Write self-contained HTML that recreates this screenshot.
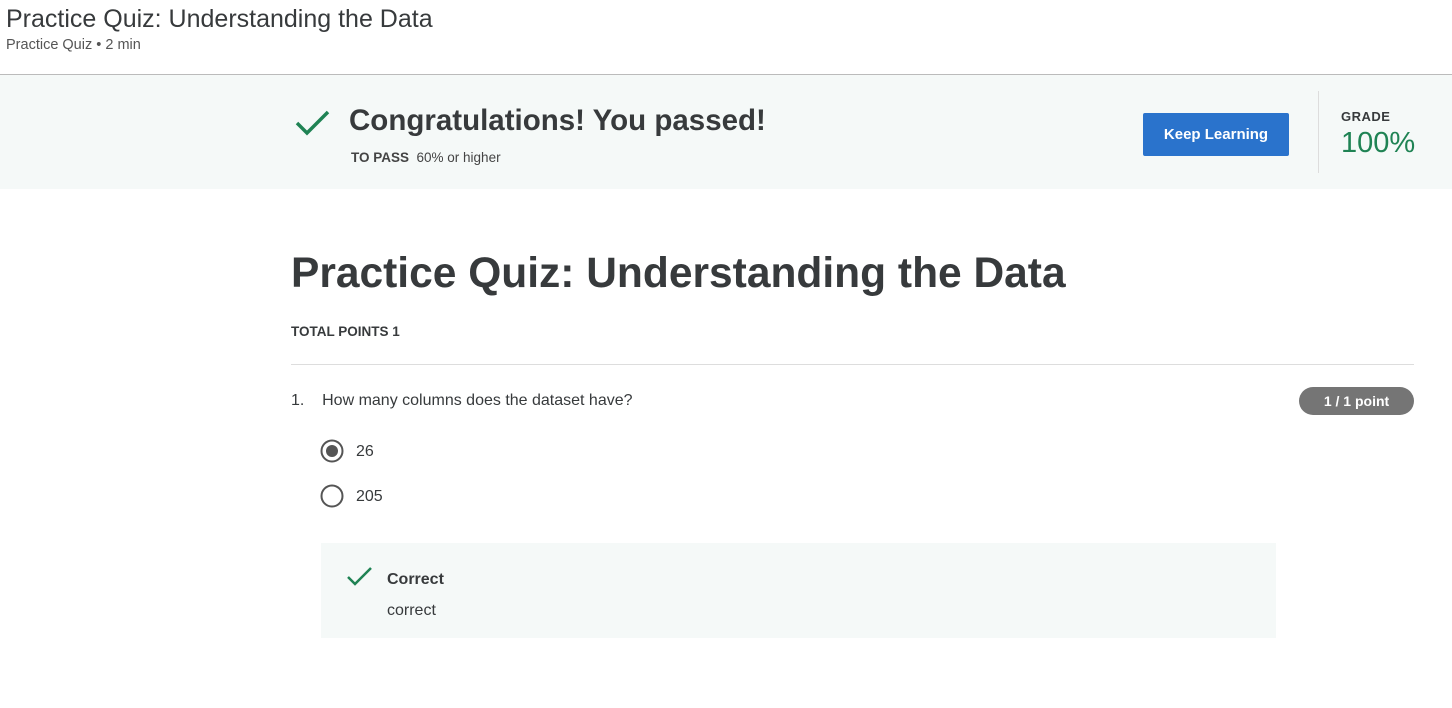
<!DOCTYPE html>
<html><head><meta charset="utf-8"><style>
*{margin:0;padding:0;box-sizing:border-box}
body{width:1452px;height:708px;background:#fff;font-family:"Liberation Sans",sans-serif;color:#373a3c;position:relative;overflow:hidden}
.a{position:absolute;white-space:nowrap}
</style></head><body>
<div class="a" style="left:6px;top:5px;font-size:25px;color:#373a3c">Practice Quiz: Understanding the Data</div>
<div class="a" style="left:6px;top:37px;font-size:14.5px;color:#555">Practice Quiz • 2 min</div>
<div class="a" style="left:0;top:74px;width:1452px;height:1px;background:#bbb"></div>
<div class="a" style="left:0;top:75px;width:1452px;height:114px;background:#f5f9f8"></div>
<svg class="a" style="left:295px;top:109px" width="36" height="28" viewBox="0 0 36 28"><path d="M2 14 L12 24 L33 3" fill="none" stroke="#1f8354" stroke-width="3.5"/></svg>
<div class="a" style="left:349px;top:104px;font-size:29.5px;font-weight:bold;color:#373a3c">Congratulations! You passed!</div>
<div class="a" style="left:351px;top:150px;font-size:13.5px;color:#444"><b>TO PASS</b>&nbsp; 60% or higher</div>
<div class="a" style="left:1143px;top:113px;width:146px;height:43px;background:#2a73cc;border-radius:2px;color:#fff;font-weight:bold;font-size:15px;text-align:center;line-height:43px">Keep Learning</div>
<div class="a" style="left:1318px;top:91px;width:1px;height:82px;background:#ddd"></div>
<div class="a" style="left:1341px;top:109px;font-size:13px;font-weight:bold;letter-spacing:0.5px;color:#373a3c">GRADE</div>
<div class="a" style="left:1341px;top:127px;font-size:29px;color:#1f8354">100%</div>
<div class="a" style="left:291px;top:250px;font-size:42.5px;font-weight:bold;color:#373a3c">Practice Quiz: Understanding the Data</div>
<div class="a" style="left:291px;top:324px;font-size:13.5px;font-weight:bold;color:#373a3c">TOTAL POINTS 1</div>
<div class="a" style="left:291px;top:364px;width:1123px;height:1px;background:#ddd"></div>
<div class="a" style="left:291px;top:392px;font-size:16px;color:#373a3c">1.&nbsp;&nbsp;&nbsp;&nbsp;How many columns does the dataset have?</div>
<div class="a" style="left:1299px;top:387px;width:115px;height:28px;background:#757575;border-radius:14px;color:#fff;font-weight:bold;font-size:14px;text-align:center;line-height:28px">1 / 1 point</div>
<svg class="a" style="left:319px;top:438px" width="26" height="70"><circle cx="13" cy="13" r="10.5" fill="none" stroke="#555" stroke-width="2"/><circle cx="13" cy="13" r="6" fill="#555"/><circle cx="13" cy="58" r="10.5" fill="none" stroke="#555" stroke-width="2"/></svg>
<div class="a" style="left:356px;top:443px;font-size:16px">26</div>
<div class="a" style="left:356px;top:488px;font-size:16px">205</div>
<div class="a" style="left:321px;top:543px;width:955px;height:95px;background:#f5f9f8"></div>
<svg class="a" style="left:346px;top:566px" width="28" height="22" viewBox="0 0 28 22"><path d="M2 11 L9 18 L25 2" fill="none" stroke="#1f8354" stroke-width="2.5"/></svg>
<div class="a" style="left:387px;top:571px;font-size:16px;font-weight:bold">Correct</div>
<div class="a" style="left:387px;top:602px;font-size:16px">correct</div>
</body></html>
